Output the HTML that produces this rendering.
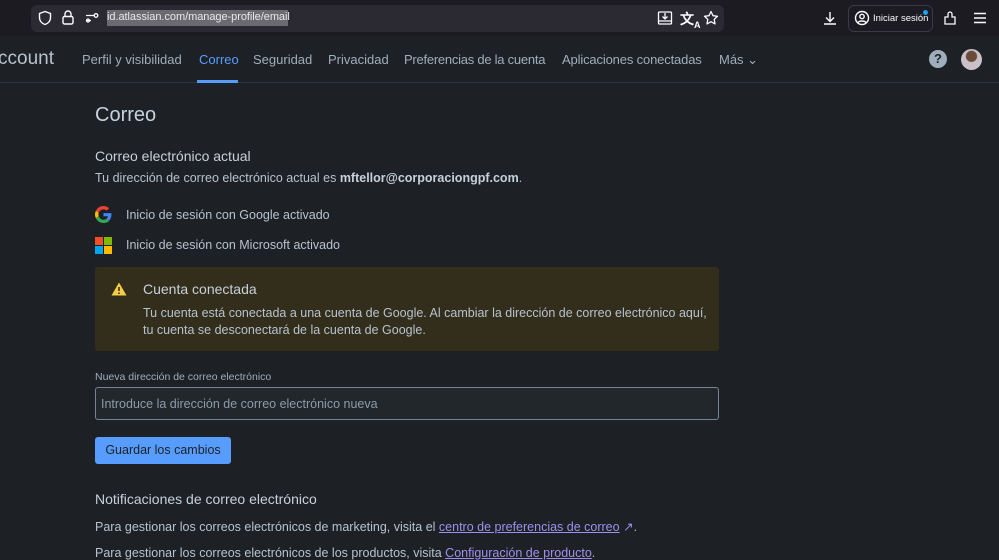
<!DOCTYPE html>
<html><head><meta charset="utf-8"><style>
*{margin:0;padding:0;box-sizing:border-box}
body{width:999px;height:560px;overflow:hidden;background:#1d2125;font-family:"Liberation Sans",sans-serif;color:#b6c2cf;position:relative}
.tb{position:absolute;left:0;top:0;width:999px;height:36px;background:#1c1b22}
.url{position:absolute;left:31px;top:5px;width:693px;height:27px;background:#2b2a33;border-radius:6px}
.ab{position:absolute;font-size:12px;color:#fbfbfe}
.nav{position:absolute;top:36px;left:0;width:999px;height:47px;border-bottom:1px solid #2c333a;background:#1d2125}
.nav span{position:absolute;top:16px;font-size:13px;color:#9fadbc}
.abs{position:absolute}
</style></head><body>
<div class="tb"></div>
<div class="url"></div>
<svg class="abs" style="left:37px;top:10px" width="16" height="16" viewBox="0 0 16 16" fill="none" stroke="#fbfbfe" stroke-width="1.4"><path d="M8 1.5L2.5 3.5v4c0 3.5 2.5 6 5.5 7 3-1 5.5-3.5 5.5-7v-4z"/></svg>
<svg class="abs" style="left:61px;top:9px" width="14" height="17" viewBox="0 0 14 17" fill="none" stroke="#fbfbfe" stroke-width="1.4"><rect x="2" y="7.5" width="10" height="7.5" rx="1.5"/><path d="M4 7.5V5a3 3 0 0 1 6 0v2.5"/></svg>
<svg class="abs" style="left:85px;top:12px" width="14" height="12" viewBox="0 0 14 12" fill="none" stroke="#fbfbfe" stroke-width="1.3"><path d="M1 3.5h8M1 8.5h5"/><circle cx="11" cy="3.5" r="1.8"/><circle cx="3" cy="8.5" r="1.5"/></svg>
<div class="abs" style="left:107px;top:10px;height:16px;width:181px;background:#6b6a70"></div>
<div class="ab" style="left:107px;top:11px;color:#e8e8ea;font-size:11px;letter-spacing:-0.05px">id.atlassian.com/manage-profile/email</div>
<svg class="abs" style="left:657px;top:10px" width="16" height="16" viewBox="0 0 16 16" fill="none" stroke="#fbfbfe" stroke-width="1.3"><rect x="1.5" y="2" width="13" height="12" rx="1"/><path d="M8 3v6M5.5 6.5L8 9l2.5-2.5M1.5 11h13"/></svg>
<div class="ab" style="left:680px;top:9px;font-size:14px;font-weight:bold">文<sub style="font-size:9px">A</sub></div>
<svg class="abs" style="left:703px;top:10px" width="16" height="16" viewBox="0 0 16 16" fill="none" stroke="#fbfbfe" stroke-width="1.3" stroke-linejoin="round"><path d="M8 1.5l2 4.2 4.5.6-3.3 3.1.8 4.5L8 11.7l-4 2.2.8-4.5L1.5 6.3l4.5-.6z"/></svg>
<svg class="abs" style="left:822px;top:10px" width="16" height="16" viewBox="0 0 16 16" fill="none" stroke="#fbfbfe" stroke-width="1.4"><path d="M8 2v9M4 7.5L8 11.5l4-4M2 14h12"/></svg>
<div class="abs" style="left:848px;top:5px;width:85px;height:27px;border:1px solid #3a3944;border-radius:6px"></div>
<svg class="abs" style="left:854px;top:10px" width="16" height="16" viewBox="0 0 16 16" fill="none" stroke="#fbfbfe" stroke-width="1.4"><circle cx="8" cy="8" r="6.5"/><circle cx="8" cy="6.5" r="2.2"/><path d="M4 12.5c1.5-2 6.5-2 8 0"/></svg>
<div class="ab" style="left:873px;top:13px;font-size:9.5px">Iniciar sesión</div>
<div class="abs" style="left:923px;top:10px;width:5px;height:5px;border-radius:50%;background:#1ba1f0"></div>
<svg class="abs" style="left:943px;top:10px" width="14" height="16" viewBox="0 0 14 16" fill="none" stroke="#fbfbfe" stroke-width="1.3"><path d="M2 14V7h3V4a2 2 0 0 1 4 0v3h3v7z"/></svg>
<svg class="abs" style="left:973px;top:12px" width="14" height="12" viewBox="0 0 14 12" stroke="#fbfbfe" stroke-width="1.4"><path d="M1 1.5h12M1 6h12M1 10.5h12"/></svg>
<div class="nav">
<span style="left:-2px;top:12px;font-size:19px;color:#b6c2cf">ccount</span>
<span style="left:82px">Perfil y visibilidad</span>
<span style="left:199px;color:#579dff">Correo</span>
<div class="abs" style="left:197px;top:44px;width:41px;height:3px;background:#579dff"></div>
<span style="left:253px">Seguridad</span>
<span style="left:328px">Privacidad</span>
<span style="left:404px;letter-spacing:-0.25px">Preferencias de la cuenta</span>
<span style="left:562px;letter-spacing:-0.15px">Aplicaciones conectadas</span>
<span style="left:719px">Más ⌄</span>
<div class="abs" style="left:929px;top:14px;width:18px;height:18px;border-radius:50%;background:#9fadbc;color:#1d2125;font-weight:bold;font-size:13px;text-align:center;line-height:18px">?</div>
<div class="abs" style="left:961px;top:13px;width:21px;height:21px;border-radius:50%;background:radial-gradient(circle at 50% 35%,#6b4a3a 30%,#c9c0c8 35%)"></div>
</div>
<div class="abs" style="left:95px;top:104px;font-size:20px;color:#c7d1db">Correo</div>
<div class="abs" style="left:95px;top:148px;font-size:14px;color:#c7d1db">Correo electrónico actual</div>
<div class="abs" style="left:95px;top:171px;font-size:12.5px">Tu dirección de correo electrónico actual es <b style="color:#c7d1db">mftellor@corporaciongpf.com</b>.</div>
<svg class="abs" style="left:95px;top:206px" width="17" height="17" viewBox="0 0 48 48"><path fill="#EA4335" d="M24 9.5c3.5 0 6.6 1.2 9 3.5l6.7-6.7C35.6 2.4 30.2 0 24 0 14.6 0 6.6 5.4 2.7 13.3l7.8 6C12.4 13.7 17.7 9.5 24 9.5z"/><path fill="#4285F4" d="M46.5 24.5c0-1.6-.1-3.1-.4-4.5H24v9h12.7c-.6 2.9-2.2 5.4-4.7 7.1l7.3 5.7c4.3-4 7.2-9.9 7.2-17.3z"/><path fill="#FBBC05" d="M10.5 28.7c-.5-1.4-.8-3-.8-4.7s.3-3.2.8-4.7l-7.800-6C1 16.6 0 20.2 0 24s1 7.4 2.7 10.7z"/><path fill="#34A853" d="M24 48c6.5 0 11.9-2.1 15.9-5.8l-7.3-5.7c-2.1 1.4-4.9 2.300-8.6 2.3-6.3 0-11.600-4.2-13.5-9.9l-7.8 6C6.6 42.6 14.6 48 24 48z"/></svg>
<div class="abs" style="left:126px;top:208px;font-size:12.5px">Inicio de sesión con Google activado</div>
<div class="abs" style="left:95px;top:237px;width:17px;height:17px;display:grid;grid-template-columns:1fr 1fr;gap:1px"><i style="background:#f25022"></i><i style="background:#7fba00"></i><i style="background:#00a4ef"></i><i style="background:#ffb900"></i></div>
<div class="abs" style="left:126px;top:238px;font-size:12.5px">Inicio de sesión con Microsoft activado</div>
<div class="abs" style="left:95px;top:267px;width:624px;height:84px;background:#332e1b;border-radius:3px"></div>
<svg class="abs" style="left:111px;top:282px" width="16" height="14" viewBox="0 0 16 14"><path d="M8 0.5L15.5 13.5H0.5z" fill="#f5cd47"/><path d="M8 5v4M8 10.5v1.5" stroke="#332e1b" stroke-width="1.6"/></svg>
<div class="abs" style="left:143px;top:281px;font-size:14px;color:#c7d1db">Cuenta conectada</div>
<div class="abs" style="left:143px;top:305px;font-size:12.5px;line-height:17px;width:570px">Tu cuenta está conectada a una cuenta de Google. Al cambiar la dirección de correo electrónico aquí, tu cuenta se desconectará de la cuenta de Google.</div>
<div class="abs" style="left:95px;top:371px;font-size:10.5px;color:#9fadbc">Nueva dirección de correo electrónico</div>
<div class="abs" style="left:95px;top:387px;width:624px;height:33px;background:#22272b;border:1px solid #738496;border-radius:3px"></div>
<div class="abs" style="left:101px;top:397px;font-size:12.5px;color:#8c9bab">Introduce la dirección de correo electrónico nueva</div>
<div class="abs" style="left:95px;top:437px;width:136px;height:27px;background:#579dff;border-radius:3px;color:#1d2125;font-size:12.5px;text-align:center;line-height:27px">Guardar los cambios</div>
<div class="abs" style="left:95px;top:491px;font-size:14px;color:#c7d1db">Notificaciones de correo electrónico</div>
<div class="abs" style="left:95px;top:519px;font-size:12.5px">Para gestionar los correos electrónicos de marketing, visita el <u style="color:#9f8fef">centro de preferencias de correo</u> <span style="color:#9f8fef">↗</span>.</div>
<div class="abs" style="left:95px;top:546px;font-size:12.5px">Para gestionar los correos electrónicos de los productos, visita <u style="color:#9f8fef">Configuración de producto</u>.</div>
</body></html>
